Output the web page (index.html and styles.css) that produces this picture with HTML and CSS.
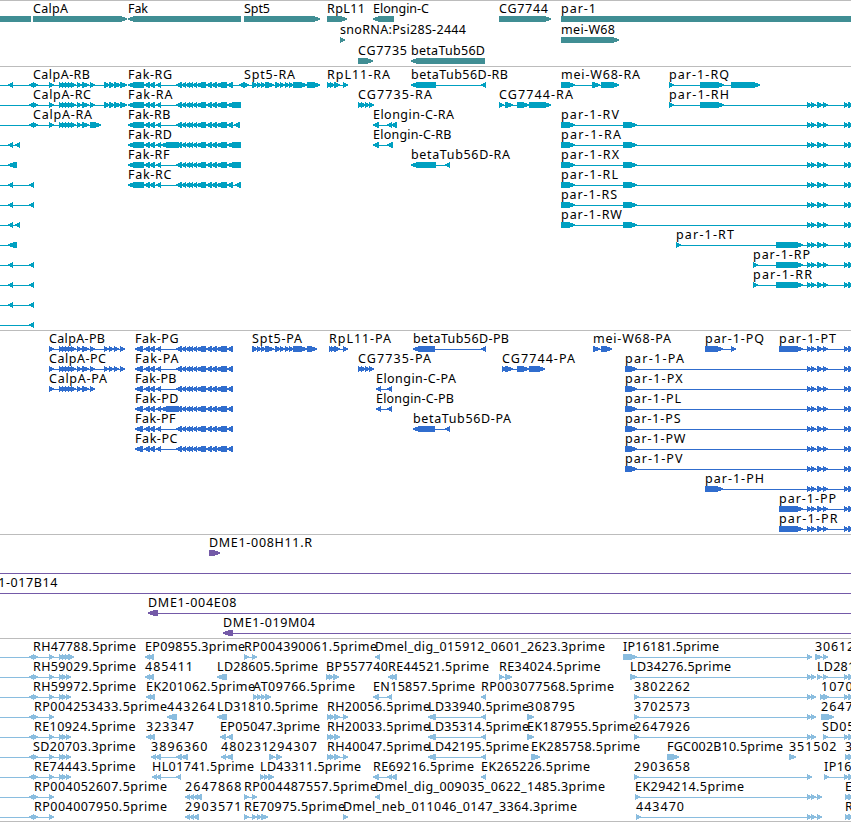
FILE: index.html
```html
<!DOCTYPE html>
<html lang="en">
<head>
<meta charset="utf-8">
<title>Genome tracks</title>
<link rel="stylesheet" href="styles.css">
</head>
<body>
<main class="browser">
<section class="track genes"><svg class="canvas"></svg></section>
<section class="track transcripts"><svg class="canvas"></svg></section>
<section class="track proteins"><svg class="canvas"></svg></section>
<section class="track clones"><svg class="canvas"></svg></section>
<section class="track ests"><svg class="canvas"></svg></section>
</main>
<script src="tracks.js"></script>
</body>
</html>
```
FILE: styles.css
```css
body {
  margin: 0;
  background: #fff;
}
.browser {
  display: flex;
  flex-direction: column;
  width: 851px;
  height: 822px;
  overflow: hidden;
}
.track {
  box-sizing: border-box;
  flex: none;
  border-top: 1px solid #bcbcbc;
}
.canvas {
  display: block;
  width: 100%;
  height: 100%;
  overflow: hidden;
  fill: currentColor;
}
.canvas polygon,
.canvas rect {
  shape-rendering: crispEdges;
}
.canvas text {
  fill: #000;
  font-family: "Noto Sans", sans-serif;
  font-size: 12.5px;
}
.genes { height: 66px; color: #408e94; }
.transcripts { height: 264px; color: #00a0c1; }
.proteins { height: 204px; color: #306dce; }
.clones { height: 104px; color: #745aa8; }
.ests { height: 184px; color: #8abddf; border-bottom: 1px solid #bcbcbc; }
```
FILE: tracks.js
```js
// Feature line: row | label | label start | label end | segments
// Segments: ">a-b" points right, "<a-b" points left, "=a-b" is plain,
// "-a-b" is only a connecting line.
const TAIL = '>807-812 >811-816 >817-823 >823-828 >844-849 >848-855';
const CALP = '>59-64 >62-67 >65-70 >68-73 >71-76 >77-82 >82-89 >90-95';
const CALP_END = '>104-110 >109-115 >114-121 >120-127';
const FAK = '<144-150 <149-155 <156-161';
const FAK2 = '<176-182 <181-186 <185-190 <188-193 <192-197 <196-206 <206-212 <211-217 <216-227';
const LEFT = '-0-30 <29-34 >33-38 >49-54';
const SPT = '>252-258 >257-262 >261-266 >265-274 >275-281 >280-285 >285-290 >289-294 >293-307';

const genes = `
0||||=0-31
0|CalpA|33|68|>33-127
0|Fak|128|148|<128-241
0|Spt5|244|270|>244-320
0|RpL11|327|365|>327-347
0|Elongin-C|373|429|<373-394
0|CG7744|499|548|>499-551
0|par-1|561|596|=561-851
1|snoRNA:Psi28S-2444|340|466|>340-345
1|mei-W68|561|615|>561-619
2|CG7735|358|407|>358-373
2|betaTub56D|411|485|<411-485`;

const transcripts = `
0||||-0-34 <8-13
0|CalpA-RB|33|90|<29-34 >33-38 >49-54 ${CALP} ${CALP_END}
1|CalpA-RC|33|91|-0-30 <29-34 >33-38 >49-54 ${CALP} ${CALP_END}
2|CalpA-RA|33|92|-0-30 <29-34 >33-38 >49-54 ${CALP} >90-101
3||||-0-9 <8-13 <15-20
4||||-0-9 <8-17
5||||-0-9 <8-13 <29-34
6||||-0-9 <8-13 <29-34
7||||-0-9 <8-13 <15-20
8||||-0-9 <8-17
9||||-0-9 <8-13 <29-34
10||||-0-9 <8-13 <29-34
11||||-0-9 <8-13 <29-34
12||||-0-30 <29-34
0|Fak-RG|128|172|<128-144 ${FAK} ${FAK2} <227-233 <239-244
1|Fak-RA|128|172.5|<128-144 ${FAK} ${FAK2} <227-241
2|Fak-RB|128|170.5|<128-144 ${FAK} ${FAK2} <227-233 <234-240
3|Fak-RD|128|172|<128-144 ${FAK} <161-179 ${FAK2} <227-241
4|Fak-RF|128|169.5|<128-144 ${FAK} ${FAK2} <227-241
5|Fak-RC|128|171.5|<128-144 ${FAK} ${FAK2} <227-233 <235-241
0|Spt5-RA|244|295|>244-249 ${SPT} >307-320
0|RpL11-RA|327|390|>327-332 >330-335 >334-340 >343-348
1|CG7735-RA|358|432|>358-363 >361-366 >365-370 >369-374
2|Elongin-C-RA|373|454|<373-379 <387-392 <391-397
3|Elongin-C-RB|373|451.5|<373-379 <387-393
0|betaTub56D-RB|411|508|<411-436 <481-486
4|betaTub56D-RA|411|510|<411-436 <445-450
1|CG7744-RA|499|573|>499-504 >505-513 >517-529 >529-551
0|mei-W68-RA|561|640|>561-575 >592-600 >601-619
0|par-1-RQ|669|729|>669-674 >700-724 >731-760
1|par-1-RH|669|729|>669-674 >700-724 ${TAIL}
2|par-1-RV|561|619|>561-575 >623-637 ${TAIL}
3|par-1-RA|561|621|>561-575 >623-637 ${TAIL}
4|par-1-RX|561|619|>561-575 >623-637 ${TAIL}
5|par-1-RL|561|618|>561-575 >623-637 ${TAIL}
6|par-1-RS|561|617|>561-575 >623-637 ${TAIL}
7|par-1-RW|561|622|>561-575 >623-637 ${TAIL}
8|par-1-RT|676|734|>676-681 >776-803 ${TAIL}
9|par-1-RP|753|810|>753-758 >776-803 ${TAIL}
10|par-1-RR|753|812|>753-758 >776-803 ${TAIL}`;

const proteins = `
0|CalpA-PB|49|105|>49-54 ${CALP} >104-109 >109-114 >114-119 >120-125
1|CalpA-PC|49|106|>49-54 ${CALP} >104-109 >109-114 >114-119 >120-125
2|CalpA-PA|49|107|>49-54 ${CALP}
0|Fak-PG|135|178.5|<135-143 ${FAK} ${FAK2} <227-233
1|Fak-PA|135|178.5|<135-143 ${FAK} ${FAK2} <227-233
2|Fak-PB|135|176.5|<135-143 ${FAK} ${FAK2} <227-233
3|Fak-PD|135|178.5|<135-143 ${FAK} <161-179 ${FAK2} <227-233
4|Fak-PF|135|175.5|<135-143 ${FAK} ${FAK2} <227-233
5|Fak-PC|135|177.5|<135-143 ${FAK} ${FAK2} <227-233
0|Spt5-PA|252|302|${SPT} >307-317
0|RpL11-PA|329|391|>329-333 >331-336 >334-340 >343-348
1|CG7735-PA|358|431|>358-363 >361-366 >365-370 >369-374
2|Elongin-C-PA|376|456|<376-381 <387-392
3|Elongin-C-PB|376|454|<376-381 <387-392
0|betaTub56D-PB|413|509|<413-435 <481-486
4|betaTub56D-PA|413|511|<413-435 <445-450
1|CG7744-PA|502|575|>502-507 >505-513 >517-529 >529-545
0|mei-W68-PA|593|671|>593-600 >601-612
0|par-1-PQ|705|764|>705-723 >731-736
0|par-1-PT|779|836|>779-803 ${TAIL}
1|par-1-PA|625|684|>625-637 ${TAIL}
2|par-1-PX|625|682.5|>625-637 ${TAIL}
3|par-1-PL|625|681|>625-637 ${TAIL}
4|par-1-PS|625|680.5|>625-637 ${TAIL}
5|par-1-PW|625|685.5|>625-637 ${TAIL}
6|par-1-PV|625|682.5|>625-637 ${TAIL}
7|par-1-PH|705|764|>705-723 ${TAIL}
8|par-1-PP|779|836|>779-803 ${TAIL}
9|par-1-PR|779|837.5|>779-803 ${TAIL}`;

const clones = `
0|DME1-008H11.R|209|312|>209-220
1||||-0-851
2|DME1-017B14|-31|57.5|-0-851
3|DME1-004E08|148|236.5|<148-158 -158-851
4|DME1-019M04|223|315|<223-233 -233-851`;

const ests = `
0|RH47788.5prime|33|136|${LEFT} >59-64 >62-67 >65-70 >68-74
1|RH59029.5prime|33|136|${LEFT} >59-64 >62-67 >66-71
2|RH59972.5prime|33|136|${LEFT} >59-64 >62-67 >66-71
3|RP004253433.5prime|34|167|${LEFT}
4|RE10924.5prime|34|135.5|${LEFT} >59-64 >62-67 >66-71
5|SD20703.3prime|33|135.5|${LEFT} >59-64 >62-67 >66-71
6|RE74443.5prime|34|135.5|${LEFT} >59-64 >62-67 >66-71
7|RP004052607.5prime|34|167|${LEFT}
8|RP004007950.5prime|34|167|${LEFT}
0|EP09855.3prime|145|245|<145-150 <148-154
1|485411|145|193|<145-150 <148-154
2|EK201062.5prime|146|255|<146-151 <149-155
3|443264|167|215|<167-177
4|323347|146|194|<146-151 <149-155
5|3896360|151|207.5|<151-156 <155-161 <176-182 <181-188
6|HL01741.5prime|152|254|<152-157 <156-161 <176-181
7|2647868|185|241.5|<185-190 <189-194 <193-198 <196-202
8|2903571|185|241.5|<185-190 <189-194 <193-199
0|RP004390061.5prime|244|377|>244-249 >252-257
1|LD28605.5prime|217|318|<217-227
2|AT09766.5prime|253|355|>253-258 >257-262 >261-266 >265-271
3|LD31810.5prime|217|318|<217-227
4|EP05047.3prime|220|320|<220-226 <227-233
5|480231|221|269|<221-226 <226-233
5|294307|269|317|>269-275 >276-282
6|LD43311.5prime|260|361|>260-265 >264-269 >268-274
7|RP004487557.5prime|244|377|>244-249 >252-257
8|RE70975.5prime|244|345|>244-249 >252-257 >257-262 >261-268
0|Dmel_dig_015912_0601_2623.3prime|375|605|<375-380
1|BP557740|326|388|>326-331 >329-334 >333-339
1|RE44521.5prime|388|489|<388-393 <391-397
2|EN15857.5prime|373|475|<373-379 <387-392
3|RH20056.5prime|327|430|>327-332 >330-335 >334-340 >343-348
4|RH20033.5prime|327|430|>327-332 >330-335 >334-340
5|RH40047.5prime|327|430|>327-332 >330-335 >334-340 >343-348
6|RE69216.5prime|373|474|<373-379 <387-392 <391-397
7|Dmel_dig_009035_0622_1485.3prime|375|605|<375-380
8|Dmel_neb_011046_0147_3364.3prime|343|577|>343-348
1|RE34024.5prime|499|600.5|>499-504 >505-512
2|RP003077568.5prime|481|614|<481-486
3|LD33940.5prime|428|529|<428-436 <481-486
4|LD35314.5prime|428|529|<428-436 <481-486
5|LD42195.5prime|428|529|<428-436 <481-486
3|308795|527|575|>527-534
4|EK187955.5prime|527|636|>527-534
5|EK285758.5prime|531|640|>531-540
6|EK265226.5prime|481|590|<481-486
0|IP16181.5prime|623|719|>623-637 >807-812
1|LD34276.5prime|630|731|>630-637 >807-812 >811-816
2|3802262|634|690|>634-639 >807-812 >811-816
3|3702573|634|690|>634-639 >807-812 >811-816
4|2647926|634|690|>634-639 >807-812 >811-816
5|FGC002B10.5prime|667|783|>667-679
5|351502|789|836.5|>789-796
6|2903658|634|690|>634-639 >807-812
7|EK294214.5prime|635|744|>635-640 >807-812 >811-816 >817-822
8|443470|636|684|>636-641 >807-812 >811-816 >817-822
0|306127|815|862|>815-822 >823-828
1|LD28111|817|870|>817-822 >823-828 >844-849 >848-855
2|107088|821|869|>820-825 >823-829 >844-849 >848-855
3|264792|821|869|>821-834
4|SD0511|822|870|>823-828 >844-849 >848-855
5|3|845|853|>845-850 >848-855
6|IP161|824|859|>824-829 >844-849 >848-855
7|E|845|853|>845-850 >848-855
8|R|845|853|>845-850 >848-855`;

const NS = 'http://www.w3.org/2000/svg';

function add(svg, name, attrs, content) {
  const node = document.createElementNS(NS, name);
  for (const key in attrs) node.setAttribute(key, attrs[key]);
  if (content) node.textContent = content;
  svg.appendChild(node);
}

function drawTrack(name, data, pitch) {
  const svg = document.querySelector('.' + name + ' .canvas');
  for (const line of data.trim().split('\n')) {
    const [row, label, x, end, parts] = line.split('|');
    const top = 15 + row * pitch;
    const segments = parts.split(' ').map(part => {
      const [a, b] = part.slice(1).split('-').map(Number);
      return { kind: part[0], a, b };
    });
    const from = Math.min(...segments.map(s => s.a));
    const to = Math.max(...segments.map(s => s.b));
    if (segments.length > 1 || segments[0].kind === '-') {
      add(svg, 'rect', { x: from, y: top + 3, width: to - from, height: 1 });
    }
    for (const { kind, a, b } of segments) {
      const head = Math.min(6, b - a - 0.5);
      if (kind === '=') add(svg, 'rect', { x: a, y: top, width: b - a, height: 6 });
      if (kind === '>') add(svg, 'polygon', { points: `${a},${top} ${b - head},${top} ${b + 0.5},${top + 2.6} ${b + 0.5},${top + 3.4} ${b - head},${top + 6} ${a},${top + 6}` });
      if (kind === '<') add(svg, 'polygon', { points: `${b},${top} ${a + head},${top} ${a - 0.5},${top + 2.6} ${a - 0.5},${top + 3.4} ${a + head},${top + 6} ${b},${top + 6}` });
    }
    if (label) add(svg, 'text', { x, y: top - 3, textLength: end - x }, label);
  }
}

drawTrack('genes', genes, 21);
drawTrack('transcripts', transcripts, 20);
drawTrack('proteins', proteins, 20);
drawTrack('clones', clones, 20);
drawTrack('ests', ests, 20);
```
